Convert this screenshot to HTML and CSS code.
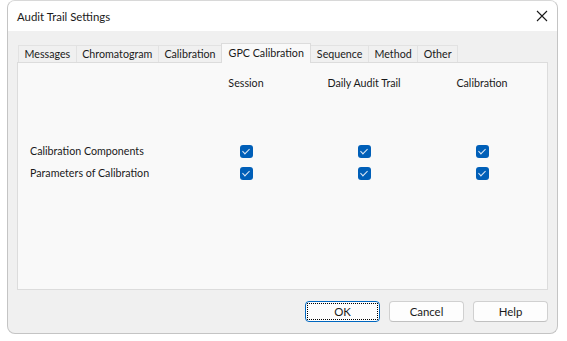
FILE: index.html
```html
<!DOCTYPE html>
<html lang="en">
<head>
    <meta charset="UTF-8">
    <meta name="viewport" content="width=device-width, initial-scale=1.0">
    <title>Audit Trail Settings</title>
    <link rel="stylesheet" href="styles.css">
</head>
<body>
    <div class="dialog">
        <div class="title-bar">
            <span class="title">Audit Trail Settings</span>
            <span class="close">
                <svg width="12" height="12" viewBox="0 0 12 12"><path d="M1 1 L11 11 M11 1 L1 11" stroke="#1a1a1a" stroke-width="1.1" fill="none"/></svg>
            </span>
        </div>
        <div class="dialog-body">
            <div class="tabs">
                <div class="tab">Messages</div>
                <div class="tab">Chromatogram</div>
                <div class="tab">Calibration</div>
                <div class="tab active">GPC Calibration</div>
                <div class="tab">Sequence</div>
                <div class="tab">Method</div>
                <div class="tab">Other</div>
            </div>
            <div class="panel">
                <div class="grid">
                    <div></div>
                    <div class="col-head">Session</div>
                    <div class="col-head">Daily Audit Trail</div>
                    <div class="col-head">Calibration</div>

                    <div class="row-label">Calibration Components</div>
                    <div class="cell"><span class="check"></span></div>
                    <div class="cell"><span class="check"></span></div>
                    <div class="cell"><span class="check"></span></div>

                    <div class="row-label">Parameters of Calibration</div>
                    <div class="cell"><span class="check"></span></div>
                    <div class="cell"><span class="check"></span></div>
                    <div class="cell"><span class="check"></span></div>
                </div>
            </div>
            <div class="buttons">
                <button class="btn default"><span class="focus">OK</span></button>
                <button class="btn">Cancel</button>
                <button class="btn">Help</button>
            </div>
        </div>
    </div>
</body>
</html>
```

FILE: styles.css
```css
* {
    margin: 0;
    padding: 0;
    box-sizing: border-box;
}
body {
    font-family: "Segoe UI", Lato, "Noto Sans", Arial, sans-serif;
    font-size: 10.7px;
    color: #1a1a1a;
    background-color: #ffffff;
}
.dialog {
    margin-left: 7px;
    width: 551px;
    height: 334px;
    border: 1px solid #c4c4c4;
    border-top-color: #d8d8d8;
    border-radius: 8px;
    background-color: #f0f0f0;
    overflow: hidden;
    display: flex;
    flex-direction: column;
}
.title-bar {
    height: 30px;
    background-color: #ffffff;
    display: flex;
    align-items: center;
    justify-content: space-between;
    padding-left: 9px;
    padding-right: 9px;
}
.title {
    font-size: 11.4px;
}
.close {
    display: flex;
    align-items: center;
}
.dialog-body {
    padding: 12px 9px 0 9px;
}
.tabs {
    display: flex;
    align-items: flex-end;
    height: 19px;
    padding-left: 1px;
}
.tab {
    height: 17px;
    padding: 0 5.5px;
    line-height: 15px;
    border: 1px solid #e2e2e2;
    border-bottom: none;
    margin-right: -1px;
    background-color: #f0f0f0;
    white-space: nowrap;
}
.tab.active {
    height: 20px;
    margin-bottom: -1px;
    line-height: 17px;
    background-color: #f9f9f9;
    border-color: #dcdcdc;
    position: relative;
    z-index: 1;
    padding: 0 6.5px;
}
.panel {
    height: 228px;
    background-color: #f9f9f9;
    border: 1px solid #dcdcdc;
    padding: 12px 0 0 12px;
}
.grid {
    display: grid;
    grid-template-columns: 157px 118px 118px 118px;
    grid-template-rows: 16px 71px 22px;
}
.col-head {
    text-align: center;
    line-height: 16px;
}
.row-label {
    line-height: 22px;
}
.grid > div:nth-child(5),
.grid > div:nth-child(6),
.grid > div:nth-child(7),
.grid > div:nth-child(8) {
    margin-top: 49px;
}
.cell {
    display: flex;
    align-items: center;
    justify-content: center;
}
.check {
    width: 13px;
    height: 13px;
    border-radius: 3px;
    background-color: #005fb8;
    position: relative;
}
.check::after {
    content: "";
    position: absolute;
    left: 4px;
    top: 2px;
    width: 3px;
    height: 6px;
    border: solid #dfe9f5;
    border-width: 0 1px 1px 0;
    transform: rotate(45deg);
}
.buttons {
    display: flex;
    justify-content: flex-end;
    gap: 9px;
    margin-top: 11px;
}
.btn {
    width: 75px;
    height: 21px;
    font-family: "Segoe UI", Lato, "Noto Sans", Arial, sans-serif;
    font-size: 11.4px;
    color: #1a1a1a;
    background-color: #fdfdfd;
    border: 1px solid #d0d0d0;
    border-bottom-color: #c0c0c0;
    border-radius: 4px;
    cursor: pointer;
}
.btn.default {
    border: 1px solid #0067c0;
    padding: 1px;
}
.btn .focus {
    display: block;
    height: 100%;
    border: 1px dotted #000000;
    line-height: 15px;
}
```
